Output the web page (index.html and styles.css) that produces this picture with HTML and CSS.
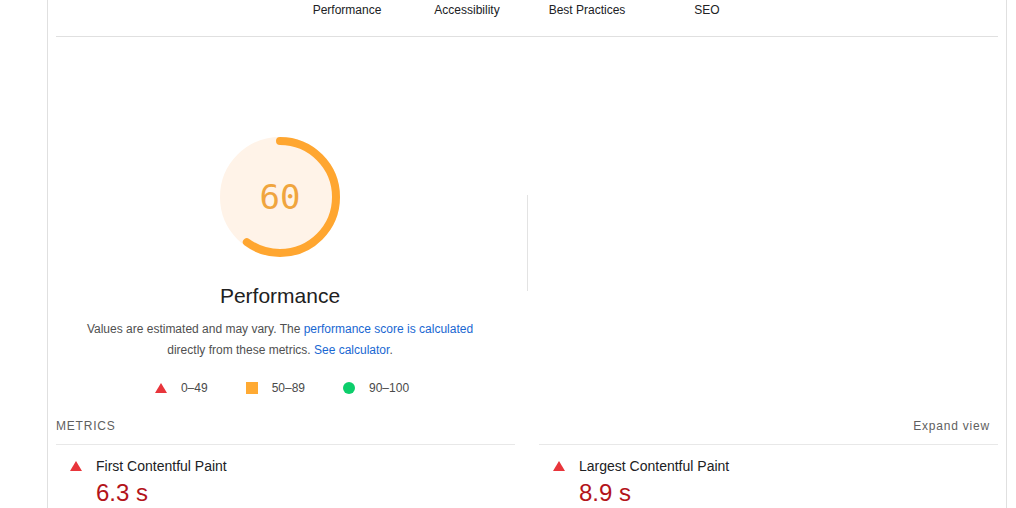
FILE: index.html
```html
<!DOCTYPE html>
<html lang="en">
<head>
<meta charset="utf-8">
<title>Performance report</title>
<link rel="stylesheet" href="styles.css">
</head>
<body>
<div class="report">
  <nav class="tabs">
    <span class="tab">Performance</span>
    <span class="tab">Accessibility</span>
    <span class="tab">Best Practices</span>
    <span class="tab">SEO</span>
  </nav>

  <section class="perf">
    <div class="perf-main">
      <div class="gauge">
        <svg class="gauge-svg" viewBox="0 0 120 120" width="120" height="120">
          <circle class="gauge-base" cx="60" cy="60" r="56"></circle>
          <circle class="gauge-arc" cx="60" cy="60" r="56" transform="rotate(-90 60 60)"></circle>
        </svg>
        <span class="gauge-value">60</span>
      </div>
      <h2 class="perf-title">Performance</h2>
      <p class="perf-desc">Values are estimated and may vary. The <a href="#">performance score is calculated</a> directly from these metrics. <a href="#">See calculator</a>.</p>
      <ul class="legend">
        <li class="legend-item">
          <svg class="icon" viewBox="0 0 12 12" width="12" height="12"><polygon class="fail" points="6,1 12,11 0,11"></polygon></svg>
          <span>0–49</span>
        </li>
        <li class="legend-item">
          <svg class="icon" viewBox="0 0 12 12" width="12" height="12"><rect class="average" x="0" y="0" width="12" height="12"></rect></svg>
          <span>50–89</span>
        </li>
        <li class="legend-item">
          <svg class="icon" viewBox="0 0 12 12" width="12" height="12"><circle class="pass" cx="6" cy="6" r="6"></circle></svg>
          <span>90–100</span>
        </li>
      </ul>
    </div>
    <div class="perf-divider"></div>
  </section>

  <section class="metrics">
    <div class="metrics-head">METRICS</div>
    <div class="metrics-head metrics-head--right">Expand view</div>
    <div class="metric">
      <div class="metric-row">
        <svg class="icon" viewBox="0 0 12 12" width="12" height="12"><polygon class="fail" points="6,1 12,11 0,11"></polygon></svg>
        <span class="metric-label">First Contentful Paint</span>
      </div>
      <div class="metric-value">6.3 s</div>
    </div>
    <div class="metric">
      <div class="metric-row">
        <svg class="icon" viewBox="0 0 12 12" width="12" height="12"><polygon class="fail" points="6,1 12,11 0,11"></polygon></svg>
        <span class="metric-label">Largest Contentful Paint</span>
      </div>
      <div class="metric-value">8.9 s</div>
    </div>
  </section>
</div>
</body>
</html>
```

FILE: styles.css
```css
* { box-sizing: border-box; }

html, body {
  margin: 0;
  padding: 0;
  background: #ffffff;
  font-family: "Liberation Sans", Arial, sans-serif;
  color: #202124;
  overflow: hidden;
}

.report {
  margin-left: 47px;
  width: 960px;
  height: 508px;
  border-left: 1px solid #e0e0e0;
  border-right: 1px solid #e0e0e0;
  padding: 0 8px;
}

/* tabs */
.tabs {
  display: flex;
  justify-content: center;
  height: 37px;
  padding-top: 3px;
  border-bottom: 1px solid #e0e0e0;
}
.tab {
  width: 120px;
  text-align: center;
  font-size: 12px;
  line-height: 14px;
  color: #202124;
}

/* performance header */
.perf {
  display: flex;
  align-items: flex-start;
  padding-top: 100px;
}
.perf-main {
  width: 448px;
  display: flex;
  flex-direction: column;
  align-items: center;
}
.perf-divider {
  width: 1px;
  height: 96px;
  margin-top: 58px;
  margin-left: 23px;
  background: #e3e3e3;
}

.gauge {
  display: grid;
  width: 120px;
  height: 120px;
}
.gauge-svg,
.gauge-value {
  grid-area: 1 / 1;
}
.gauge-base {
  fill: #fff3e8;
  stroke: #fff3e8;
  stroke-width: 8;
}
.gauge-arc {
  fill: none;
  stroke: #ffa630;
  stroke-width: 8;
  stroke-linecap: round;
  stroke-dasharray: 211.1 351.9;
}
.gauge-value {
  align-self: center;
  justify-self: center;
  font-family: "DejaVu Sans Mono", "Liberation Mono", monospace;
  font-size: 34px;
  line-height: 40px;
  color: #f0a53e;
}

.perf-title {
  margin: 27px 0 0;
  font-size: 21px;
  line-height: 24px;
  font-weight: normal;
  color: #212121;
}

.perf-desc {
  margin: 11px 0 0;
  max-width: 400px;
  text-align: center;
  font-size: 12px;
  line-height: 21px;
  color: #505050;
}
.perf-desc a {
  color: #1967d2;
  text-decoration: none;
}

.legend {
  display: flex;
  gap: 38px;
  margin: 19px 0 0 4px;
  padding: 0;
  list-style: none;
}
.legend-item {
  display: flex;
  align-items: center;
  gap: 14px;
  font-size: 12px;
  line-height: 16px;
  color: #4a4a4a;
}

.icon { display: block; flex: none; }
.fail { fill: #e8353b; }
.average { fill: #ffaa33; }
.pass { fill: #0cce6b; }

/* metrics */
.metrics {
  display: grid;
  grid-template-columns: 1fr 1fr;
  column-gap: 24px;
  margin-top: 14px;
}
.metrics-head {
  padding: 8px 0 10px;
  font-size: 12px;
  line-height: 16px;
  letter-spacing: 0.8px;
  color: #5f5f5f;
  border-bottom: 1px solid #e8e8e8;
}
.metrics-head--right {
  text-align: right;
  padding-right: 8px;
}

.metric {
  padding: 11px 0 0 14px;
}
.metric-row {
  display: flex;
  align-items: center;
  gap: 14px;
}
.metric-label {
  font-size: 14px;
  line-height: 20px;
  color: #202124;
}
.metric-value {
  margin: 3px 0 0 26px;
  font-size: 24px;
  line-height: 28px;
  color: #b3141a;
}
```
